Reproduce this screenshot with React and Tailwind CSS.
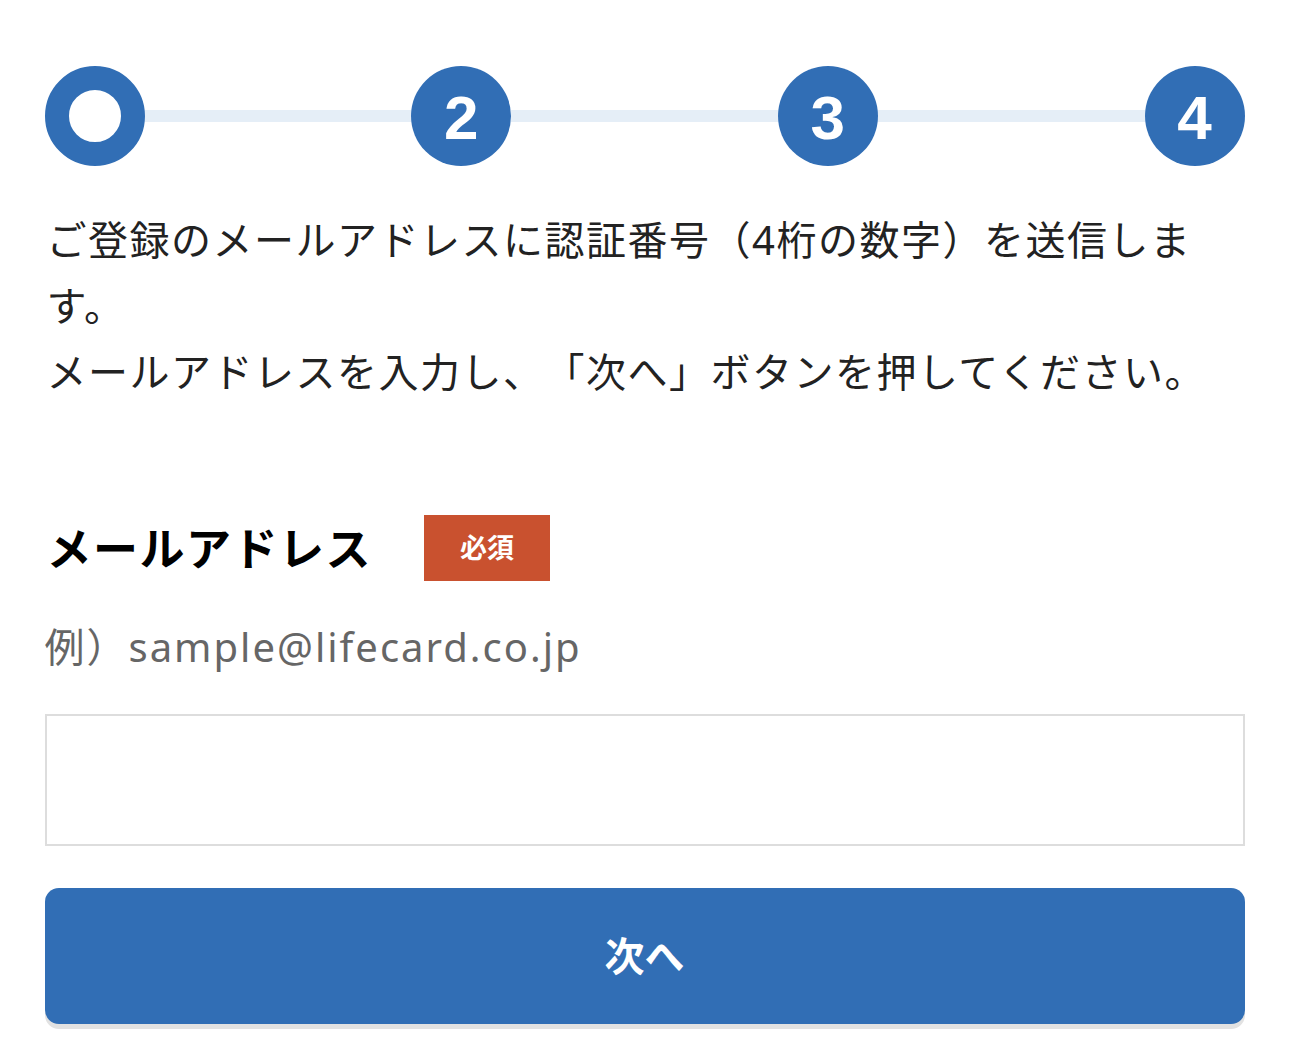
import React, { useState } from "react";

const jp = { fontFamily: '"Noto Sans", "Noto Sans CJK JP", sans-serif' };

const Step = ({ n, current }) => {
  if (current) {
    return (
      <div className="flex h-[100px] w-[100px] shrink-0 items-center justify-center rounded-full border-[24px] border-[#316eb5] bg-white" />
    );
  }
  return (
    <div
      className="flex h-[100px] w-[100px] shrink-0 items-center justify-center rounded-full bg-[#316eb5] pt-[4px] text-[62px] font-bold leading-none text-white"
      style={{ fontFamily: '"Liberation Sans", Arial, sans-serif' }}
    >
      {n}
    </div>
  );
};

const Bar = () => <div className="h-[12px] flex-1 bg-[#e5eef7]" />;

export default function App() {
  const [email, setEmail] = useState("");

  return (
    <div className="min-h-screen w-full bg-white" style={jp}>
      <div className="mx-auto w-[1200px] pt-[66px]">
        {/* ステップ */}
        <div className="flex items-center">
          <Step n={1} current />
          <Bar />
          <Step n={2} />
          <Bar />
          <Step n={3} />
          <Bar />
          <Step n={4} />
        </div>

        <p className="mt-[41px] w-[1178px] pl-[2px] text-[40px] leading-[66px] tracking-[1.5px] text-[#222] [text-spacing-trim:space-all]">
          ご登録のメールアドレスに認証番号（4桁の数字）を送信します。
          <br />
          メールアドレスを入力し、「次へ」ボタンを押してください。
        </p>

        <div className="mt-[110px] flex items-center">
          <span className="pl-[2px] text-[45px] font-bold leading-none tracking-[1.5px] text-black">
            メールアドレス
          </span>
          <span className="ml-[52px] flex h-[66px] w-[126px] items-center justify-center bg-[#c9512f] text-[27px] font-bold text-white">
            必須
          </span>
        </div>

        <p className="mt-[36px] text-[40px] leading-[60px] tracking-[2px] text-[#666] [text-spacing-trim:space-all]">
          例）sample@lifecard.co.jp
        </p>

        <input
          type="email"
          value={email}
          onChange={(e) => setEmail(e.target.value)}
          className="mt-[37px] block h-[132px] w-full border-2 border-[#dddddd] bg-white px-4 text-[40px] outline-none"
        />

        <button className="mt-[42px] flex h-[136px] w-full items-center justify-center rounded-[14px] bg-[#316eb5] text-[40px] font-bold text-white shadow-[0_5px_0_#e2e2e2]">
          次へ
        </button>
      </div>
    </div>
  );
}
